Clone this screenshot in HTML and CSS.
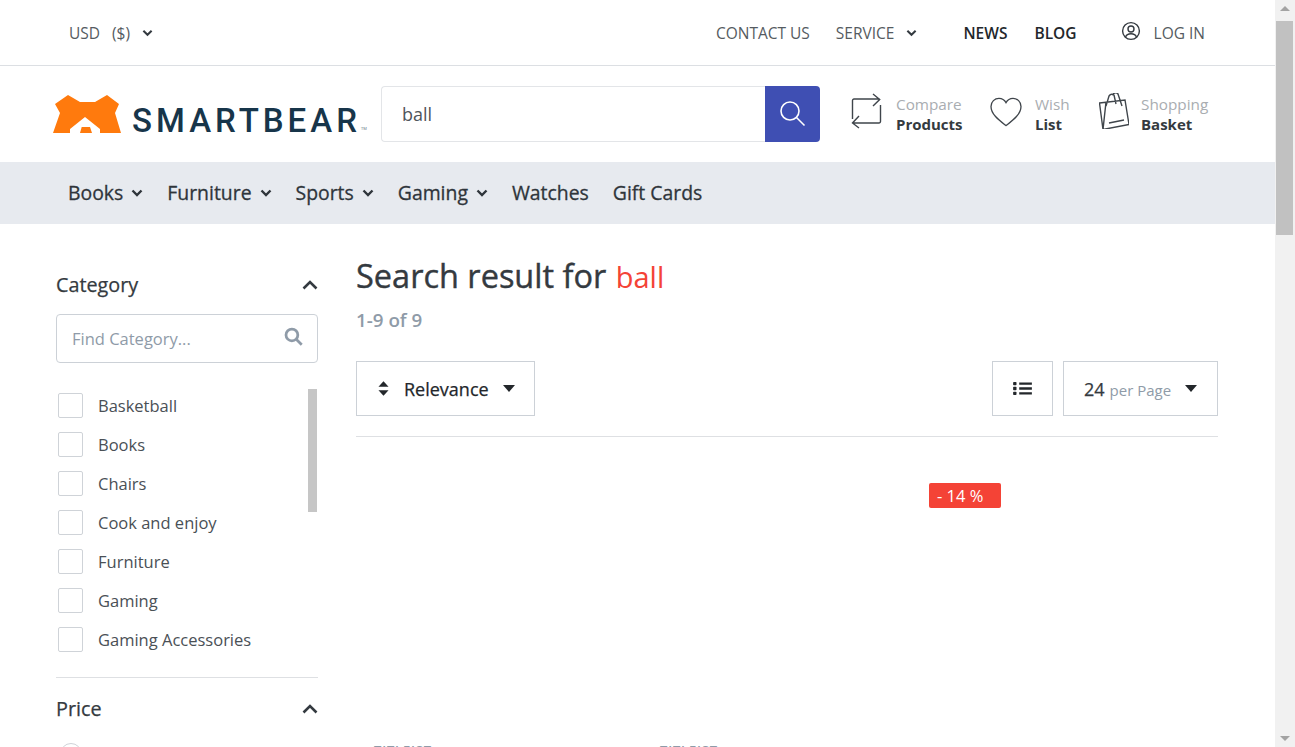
FILE: index.html
```html
<!DOCTYPE html>
<html lang="en">
<head>
<meta charset="utf-8">
<title>Search result for ball</title>
<link rel="stylesheet" href="styles.css">
</head>
<body>
<div class="page">
  <div class="viewport">
    <div class="topbar">
      <div class="currency"><span>USD</span><span class="cur-sym">($)</span>
        <svg class="chev" viewBox="0 0 12 8"><path d="M1.5 1.5 6 6l4.500-4.500"/></svg>
      </div>
      <nav class="toplinks">
        <a class="tl contact">CONTACT US</a>
        <a class="tl service">SERVICE <svg class="chev" viewBox="0 0 12 8"><path d="M1.5 1.500 6 6l4.500-4.500"/></svg></a>
        <a class="tl strong news">NEWS</a>
        <a class="tl strong blog">BLOG</a>
        <a class="tl login">
          <svg class="user" viewBox="0 0 20 20"><circle cx="10" cy="10" r="8.400"/><circle cx="10" cy="8" r="3"/><path d="M4.600 16c.8-2.400 2.600-3.300 5.400-3.300s4.600.9 5.400 3.300"/></svg>
          LOG IN</a>
      </nav>
    </div>

    <header class="header">
      <div class="logo">
        <svg class="bear" viewBox="0 0 68 38"><path d="M0 38 7 18 2 9 15 0 27 7H42L54 0 66 9 62 18 68 38H47V34L32 22 17 34V38Z" fill="#ff7a0d"/><path d="M27 38 28.700 32H37L39 38Z" fill="#ff7a0d"/></svg>
        <span class="logo-text">SMARTBEAR</span><span class="tm">TM</span>
      </div>
      <div class="search">
        <div class="search-input">ball</div>
        <button class="search-btn"><svg viewBox="0 0 26 26"><circle cx="10" cy="10" r="9"/><path d="m16.500 16.500 8 8"/></svg></button>
      </div>
      <div class="actions">
        <div class="action compare">
          <svg class="act-icon" viewBox="0 0 32 36"><path d="M1.500 26V7.500A1.500 1.500 0 0 1 3 6H28.700M22 1l6.700 5.500L22 13M29.500 12V28.500A1.500 1.500 0 0 1 28 30H2M8 23 1.500 30 8 35"/></svg>
          <div class="act-text"><span class="act-top">Compare</span><span class="act-bot">Products</span></div>
        </div>
        <div class="action wish">
          <svg class="act-icon" viewBox="0 0 34 32"><path d="M17 30.500C10 25 1 18.500 1 10 1 5 5 1.500 9.500 1.500c3.200 0 6 1.800 7.500 4.500 1.500-2.700 4.300-4.500 7.500-4.500C29 1.500 33 5 33 10c0 8.500-9 15-16 20.500z"/></svg>
          <div class="act-text"><span class="act-top">Wish</span><span class="act-bot">List</span></div>
        </div>
        <div class="action basket">
          <svg class="act-icon" viewBox="10 5 30 36"><path d="M10.500 15 36 12 40 36.500 14 41.500ZM14 41.500 17 14M17 18 20 8Q22 5 25 7L27 16M23 7Q27 3 29 6L33 18M20 35 35 32"/></svg>
          <div class="act-text"><span class="act-top">Shopping</span><span class="act-bot">Basket</span></div>
        </div>
      </div>
    </header>

    <nav class="mainnav">
      <a class="nav-item">Books <svg class="chev" viewBox="0 0 12 8"><path d="M1.500 1.500 6 6l4.500-4.500"/></svg></a>
      <a class="nav-item">Furniture <svg class="chev" viewBox="0 0 12 8"><path d="M1.500 1.500 6 6l4.500-4.500"/></svg></a>
      <a class="nav-item">Sports <svg class="chev" viewBox="0 0 12 8"><path d="M1.500 1.500 6 6l4.500-4.500"/></svg></a>
      <a class="nav-item">Gaming <svg class="chev" viewBox="0 0 12 8"><path d="M1.500 1.500 6 6l4.500-4.500"/></svg></a>
      <a class="nav-item">Watches</a>
      <a class="nav-item">Gift Cards</a>
    </nav>

    <div class="body">
      <aside class="sidebar">
        <div class="facet-head"><span>Category</span><svg class="chev-up" viewBox="0 0 16 10"><path d="M1.500 8.500 8 2l6.500 6.500"/></svg></div>
        <div class="find">
          <span>Find Category...</span>
          <svg viewBox="0 0 18 18"><circle cx="7.500" cy="7.500" r="5.600"/><path d="m11.800 11.800 5 5"/></svg>
        </div>
        <div class="cat-wrap">
          <ul class="cat-list">
            <li><i class="box"></i>Basketball</li>
            <li><i class="box"></i>Books</li>
            <li><i class="box"></i>Chairs</li>
            <li><i class="box"></i>Cook and enjoy</li>
            <li><i class="box"></i>Furniture</li>
            <li><i class="box"></i>Gaming</li>
            <li><i class="box"></i>Gaming Accessories</li>
          </ul>
          <div class="cat-thumb"></div>
        </div>
        <div class="facet-head price"><span>Price</span><svg class="chev-up" viewBox="0 0 16 10"><path d="M1.500 8.500 8 2l6.500 6.500"/></svg></div>
        <i class="radio"></i>
      </aside>

      <main class="results">
        <h1 class="title">Search result for <em>ball</em></h1>
        <div class="count">1-9 of 9</div>
        <div class="toolbar">
          <div class="tbtn sort">
            <svg class="updown" viewBox="0 0 12 18"><path d="M6 1 11.500 7H.5zM6 17 .5 11h11z"/></svg>
            <span>Relevance</span>
            <svg class="caret" viewBox="0 0 12 7"><path d="M0 0h12L6 7z"/></svg>
          </div>
          <div class="tool-right">
            <div class="tbtn listbtn">
              <svg viewBox="0 0 20 16"><path d="M6.500 1.500H20v2.600H6.500zM6.500 6.700H20v2.600H6.500zM6.500 11.900H20v2.600H6.500z"/><rect x="0" y="1" width="3.600" height="3.600" rx=".8"/><rect x="0" y="6.200" width="3.600" height="3.600" rx=".8"/><rect x="0" y="11.400" width="3.600" height="3.600" rx=".8"/></svg>
            </div>
            <div class="tbtn perpage">
              <span class="pp-num">24</span><span class="pp-lbl">per Page</span>
              <svg class="caret" viewBox="0 0 12 7"><path d="M0 0h12L6 7z"/></svg>
            </div>
          </div>
        </div>
        <div class="grid">
          <div class="card"><div class="card-img"></div><div class="card-brand">TITLEIST</div></div>
          <div class="card"><div class="card-img"></div><div class="card-brand">TITLEIST</div></div>
          <div class="card"><div class="card-img"><span class="badge">- 14 %</span></div></div>
        </div>
      </main>
    </div>
  </div>

  <div class="scrollbar">
    <svg class="sb-arrow" viewBox="0 0 20 17"><path d="M10 6l5 5H5z"/></svg>
    <div class="sb-thumb"></div>
    <div class="sb-space"></div>
    <svg class="sb-arrow" viewBox="0 0 20 17"><path d="M10 11 5 6h10z"/></svg>
  </div>
</div>
</body>
</html>
```
FILE: styles.css
```css
* { box-sizing: border-box; }
html, body { margin: 0; height: 100%; overflow: hidden; }
body { font-family: "Open Sans", "Noto Sans", sans-serif; color: #343a40; background: #fff; }
.page { display: flex; height: 747px; width: 1295px; overflow: hidden; }
.viewport { flex: 1; min-width: 0; height: 747px; overflow: hidden; }

.chev { width: 11px; height: 8px; fill: none; stroke: currentColor; stroke-width: 2.200; flex: none; }

.topbar { height: 66px; border-bottom: 1px solid #dcdfe3; display: flex; align-items: center; justify-content: space-between; padding: 0 70px 0 69px; font-size: 15.5px; color: #555b61; }
.currency { display: flex; align-items: center; gap: 12px; color: #555b61; }
.currency .chev { color: #343a40; }
.toplinks { display: flex; align-items: center; }
.tl { display: flex; align-items: center; }
.contact { margin-right: 26px; }
.service { gap: 12px; margin-right: 46px; }
.service .chev { color: #343a40; }
.strong { color: #23272b; font-weight: 600; }
.news { margin-right: 27px; }
.blog { margin-right: 44px; }
.login { gap: 13px; }
.user { width: 20px; height: 20px; fill: none; stroke: #343a40; stroke-width: 1.400; margin-top: -3px; }

.header { height: 96px; display: flex; align-items: center; padding-left: 53px; }
.logo { display: flex; align-items: center; width: 328px; flex: none; }
.bear { width: 68px; height: 38px; flex: none; margin-right: 11px; }
.logo-text { font-family: Roboto, sans-serif; font-weight: 500; font-size: 33px; letter-spacing: 4px; color: #17354a; line-height: 1; margin-top: 12px; }
.tm { font-size: 4px; color: #5d7080; align-self: flex-end; margin: 0 0 6px 0; }
.search { width: 439px; height: 56px; display: flex; flex: none; }
.search-input { flex: 1; border: 1px solid #e3e5e8; border-right: 0; border-radius: 4px 0 0 4px; padding: 0 20px; display: flex; align-items: center; font-size: 18px; color: #4f555b; }
.search-btn { width: 55px; border: 0; padding: 0; background: #3f4fb3; border-radius: 0 4px 4px 0; display: flex; align-items: center; justify-content: center; }
.search-btn svg { width: 26px; height: 26px; fill: none; stroke: #fff; stroke-width: 1.600; }
.actions { display: flex; margin-left: 31px; }
.action { display: flex; align-items: center; }
.compare { width: 138px; gap: 13px; }
.wish { width: 110px; gap: 12px; }
.basket { gap: 12px; }
.act-icon { fill: none; stroke: #3f454b; stroke-width: 1.400; flex: none; }
.compare .act-icon { width: 32px; height: 36px; margin-bottom: 6px; }
.wish .act-icon { width: 34px; height: 30px; margin-bottom: 4px; }
.basket .act-icon { width: 30px; height: 36px; margin-bottom: 6px; }
.act-text { display: flex; flex-direction: column; font-size: 15.300px; line-height: 20px; }
.act-top { color: #a9adb1; }
.act-bot { color: #343a40; font-size: 15px; font-weight: 700; }

.mainnav { height: 62px; background: #e7eaef; display: flex; align-items: center; padding: 0 0 2px 68px; gap: 24px; font-size: 19.400px; font-weight: 500; -webkit-text-stroke: .3px #2f353b; color: #2f353b; }
.nav-item { display: flex; align-items: center; gap: 8px; }
.nav-item .chev { width: 12px; height: 8px; stroke-width: 2.400; margin-top: 2px; }

.body { display: flex; padding: 0 57px 0 56px; }
.sidebar { width: 262px; flex: none; margin-right: 38px; }
.facet-head { display: flex; justify-content: space-between; align-items: center; font-size: 19.800px; font-weight: 500; -webkit-text-stroke: .25px #343a40; color: #343a40; height: 25px; margin-top: 48px; }
.chev-up { width: 16px; height: 10px; fill: none; stroke: #343a40; stroke-width: 2.600; margin-top: 1px; }
.find { height: 49px; margin-top: 17px; border: 1px solid #ccd1d7; border-radius: 4px; display: flex; align-items: center; justify-content: space-between; padding: 0 14px 0 15px; font-size: 16.500px; color: #8f9ba8; }
.find svg { width: 19px; height: 19px; fill: none; stroke: #8f9ba8; stroke-width: 2.600; margin-top: -4px; }
.cat-wrap { position: relative; margin-top: 23px; padding: 7px 0 25px; border-bottom: 1px solid #dee0e3; }
.cat-list { list-style: none; margin: 0; padding: 0 0 0 2px; display: flex; flex-direction: column; gap: 14px; font-size: 16.500px; color: #4a5056; }
.cat-list li { height: 25px; display: flex; align-items: center; gap: 15px; line-height: 25px; }
.box { width: 25px; height: 25px; flex: none; border: 1px solid #cfd3d8; border-radius: 2px; background: #fff; }
.cat-thumb { position: absolute; right: 1px; top: 3px; width: 9px; height: 123px; background: #c6c6c6; }
.facet-head.price { margin-top: 18px; }
.radio { display: block; width: 22px; height: 22px; border: 1px solid #cfd3d8; border-radius: 50%; margin: 22px 0 0 4px; }

.results { flex: 1; min-width: 0; }
.title { margin: 30px 0 0; font-size: 32.500px; line-height: 44px; font-weight: 500; -webkit-text-stroke: .4px #343a40; color: #343a40; }
.title em { font-style: normal; font-weight: 400; font-size: 29px; margin-left: 1px; -webkit-text-stroke: 0; color: #f44336; }
.count { margin-top: 9px; font-size: 18.800px; line-height: 24px; font-weight: 600; color: #8f9ba8; }
.toolbar { display: flex; justify-content: space-between; margin-top: 29px; padding-bottom: 20px; border-bottom: 1px solid #dee0e3; }
.tool-right { display: flex; gap: 10px; }
.tbtn { height: 55px; border: 1px solid #ccd1d7; display: flex; align-items: center; background: #fff; }
.sort { width: 179px; padding-left: 21px; font-size: 18px; font-weight: 500; -webkit-text-stroke: .25px #23272b; color: #23272b; }
.updown { width: 11px; height: 17px; fill: #23272b; margin-right: 15px; }
.caret { width: 12px; height: 7px; fill: #23272b; }
.sort .caret { margin-left: 14px; }
.listbtn { width: 61px; justify-content: center; }
.listbtn svg { width: 19px; height: 15px; fill: #23272b; }
.perpage { width: 155px; padding-left: 20px; }
.pp-num { font-size: 18px; font-weight: 500; -webkit-text-stroke: .25px #343a40; color: #343a40; }
.pp-lbl { font-size: 15px; color: #8f9ba8; margin-left: 5px; margin-top: 2px; }
.perpage .caret { margin-left: 14px; }

.grid { display: grid; grid-template-columns: repeat(3, 286px); }
.card { padding-left: 18px; }
.card-img { height: 305px; position: relative; }
.card-brand { font-size: 13px; line-height: 16px; font-weight: 600; letter-spacing: .8px; color: #8f9ba8; }
.badge { position: absolute; left: -17px; top: 46px; width: 72px; height: 25px; background: #f44336; color: #fff; border-radius: 2px; font-size: 16.500px; line-height: 25px; padding-left: 8px; white-space: nowrap; }

.scrollbar { width: 20px; flex: none; height: 747px; background: #f1f1f1; display: flex; flex-direction: column; align-items: stretch; }
.sb-arrow { width: 20px; height: 17px; flex: none; fill: #a3a3a3; }
.sb-thumb { height: 214px; margin: 4px 2px 0 1px; background: #c1c1c1; flex: none; }
.sb-space { flex: 1; }
```
